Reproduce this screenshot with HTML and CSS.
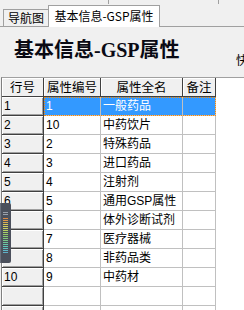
FILE: index.html
```html
<!DOCTYPE html>
<html lang="zh-CN">
<head>
<meta charset="utf-8">
<title>基本信息-GSP属性</title>
<link rel="stylesheet" href="styles.css">
</head>
<body>
<div class="topstrip"><span class="seg seg-a"></span><span class="seg seg-b"></span></div>
<div class="tabs">
  <div class="tab">导航图</div>
  <div class="tab active">基本信息-GSP属性</div>
</div>
<div class="titlebar">
  <h1 class="title">基本信息-GSP属性</h1>
  <span class="cut">快</span>
</div>
<div class="grid">
  <div class="row head">
    <div class="c hc">行号</div><div class="c hc">属性编号</div><div class="c hc">属性全名</div><div class="c hc">备注</div>
  </div>
  <div class="row sel">
    <div class="c rn">1</div><div class="c d">1</div><div class="c d">一般药品</div><div class="c d"></div>
  </div>
  <div class="row">
    <div class="c rn">2</div><div class="c d">10</div><div class="c d">中药饮片</div><div class="c d"></div>
  </div>
  <div class="row">
    <div class="c rn">3</div><div class="c d">2</div><div class="c d">特殊药品</div><div class="c d"></div>
  </div>
  <div class="row">
    <div class="c rn">4</div><div class="c d">3</div><div class="c d">进口药品</div><div class="c d"></div>
  </div>
  <div class="row">
    <div class="c rn">5</div><div class="c d">4</div><div class="c d">注射剂</div><div class="c d"></div>
  </div>
  <div class="row">
    <div class="c rn">6</div><div class="c d">5</div><div class="c d">通用GSP属性</div><div class="c d"></div>
  </div>
  <div class="row">
    <div class="c rn">7</div><div class="c d">6</div><div class="c d">体外诊断试剂</div><div class="c d"></div>
  </div>
  <div class="row">
    <div class="c rn">8</div><div class="c d">7</div><div class="c d">医疗器械</div><div class="c d"></div>
  </div>
  <div class="row">
    <div class="c rn">9</div><div class="c d">8</div><div class="c d">非药品类</div><div class="c d"></div>
  </div>
  <div class="row">
    <div class="c rn">10</div><div class="c d">9</div><div class="c d">中药材</div><div class="c d"></div>
  </div>
  <div class="row">
    <div class="c rn"></div><div class="c d"></div><div class="c d"></div><div class="c d"></div>
  </div>
  <div class="row">
    <div class="c rn"></div><div class="c d"></div><div class="c d"></div><div class="c d"></div>
  </div>
</div>
<div class="meter">
  <svg width="11" height="60" viewBox="0 0 11 60">
    <rect x="0" y="0" width="11" height="60" rx="2" fill="#4b505c"/>
    <rect x="0" y="0" width="1" height="60" fill="#6a707c"/>
    <g stroke-width="1">
      <line x1="3" y1="9.5" x2="8" y2="9.5" stroke="#9aa0aa"/>
      <line x1="3" y1="11.5" x2="8" y2="11.5" stroke="#9aa0aa"/>
      <line x1="3" y1="15.5" x2="8" y2="15.5" stroke="#e08a40"/>
      <line x1="3" y1="17.5" x2="8" y2="17.5" stroke="#e09a48"/>
      <line x1="3" y1="19.5" x2="8" y2="19.5" stroke="#d8b050"/>
      <line x1="3" y1="21.5" x2="8" y2="21.5" stroke="#d8c858"/>
      <line x1="3" y1="23.5" x2="8" y2="23.5" stroke="#d0d060"/>
      <line x1="3" y1="25.5" x2="8" y2="25.5" stroke="#c8d060"/>
      <line x1="3" y1="27.5" x2="8" y2="27.5" stroke="#b8d060"/>
      <line x1="3" y1="29.5" x2="8" y2="29.5" stroke="#a8d068"/>
      <line x1="3" y1="31.5" x2="8" y2="31.5" stroke="#98c868"/>
      <line x1="3" y1="33.5" x2="8" y2="33.5" stroke="#88c870"/>
      <line x1="3" y1="35.5" x2="8" y2="35.5" stroke="#80c878"/>
      <line x1="3" y1="37.5" x2="8" y2="37.5" stroke="#78c888"/>
      <line x1="3" y1="39.5" x2="8" y2="39.5" stroke="#70c898"/>
      <line x1="3" y1="41.5" x2="8" y2="41.5" stroke="#68c8a8"/>
      <line x1="3" y1="43.5" x2="8" y2="43.5" stroke="#60c8b8"/>
      <line x1="3" y1="45.5" x2="8" y2="45.5" stroke="#60c0c0"/>
      <line x1="3" y1="47.5" x2="8" y2="47.5" stroke="#60b8c8"/>
      <line x1="3" y1="49.5" x2="8" y2="49.5" stroke="#60b0c8"/>
    </g>
  </svg>
</div>
</body>
</html>
```

FILE: styles.css
```css
html, body {
  margin: 0;
  padding: 0;
}
body {
  width: 244px;
  height: 310px;
  overflow: hidden;
  background: #f0f0f0;
  font-family: "Liberation Sans", "Noto Sans CJK SC", sans-serif;
  font-size: 12px;
  color: #000;
  position: relative;
}
.topstrip {
  display: flex;
  height: 5px;
}
.seg {
  box-sizing: border-box;
  height: 4px;
  border-right: 1px solid #a0a0a0;
}
.seg-a { width: 109px; }
.seg-b { width: 110px; }

.tabs {
  display: flex;
  align-items: flex-end;
  height: 21px;
  padding-left: 3px;
  border-bottom: 1px solid #a0a0a0;
}
.tab {
  box-sizing: border-box;
  height: 17px;
  width: 45px;
  border: 1px solid #a0a0a0;
  border-bottom: none;
  border-right: none;
  font-family: "Noto Sans CJK SC", sans-serif;
  font-size: 12px;
  line-height: 16px;
  text-align: center;
  background: #f0f0f0;
}
.tab.active {
  width: 112px;
  height: 22px;
  margin-bottom: -1px;
  background: #fff;
  border-right: 1px solid #a0a0a0;
  line-height: 20px;
  padding-bottom: 2px;
}

.titlebar {
  display: flex;
  align-items: flex-start;
  width: 256px;
  height: 50px;
  white-space: nowrap;
}
.title {
  margin: 13px 0 0 0;
  padding-left: 14px;
  width: 236px;
  box-sizing: border-box;
  font-family: "Liberation Serif", "Noto Sans CJK SC", serif;
  font-size: 20px;
  line-height: 20px;
  font-weight: bold;
  color: #0a0a14;
  flex: none;
}
.cut {
  margin-top: 27px;
  font-family: "Noto Sans CJK SC", sans-serif;
  font-size: 12px;
  line-height: 12px;
  flex: none;
}

.grid {
  border-top: 1px solid #a0a0a0;
  background: #fff;
  margin-left: 1px;
  border-left: 1px solid #808080;
  height: 240px;
}
.row {
  display: grid;
  grid-template-columns: 42px 57px 82px 33px;
  height: 19px;
  position: relative;
}
.c {
  box-sizing: border-box;
  height: 19px;
  line-height: 18px;
  padding-left: 2px;
  white-space: nowrap;
  overflow: hidden;
}
.hc {
  background: #f0f0f0;
  border-right: 1px solid #404040;
  border-bottom: 1px solid #404040;
  box-shadow: inset 1px 1px 0 #fff;
  text-align: center;
  padding-left: 0;
  font-family: "Noto Sans CJK SC", sans-serif;
  font-size: 12.5px;
}
.rn {
  background: #f0f0f0;
  border-right: 1px solid #404040;
  border-bottom: 1px solid #404040;
  box-shadow: inset 1px 1px 0 #fff, inset -1px -1px 0 #a0a0a0;
}
.d {
  border-right: 1px solid #c0c0c0;
  border-bottom: 1px solid #c0c0c0;
}
.sel .d {
  background: #3399ff;
  color: #fff;
}
.sel::after {
  content: "";
  position: absolute;
  left: 42px;
  top: 0;
  width: 172px;
  height: 19px;
  box-sizing: border-box;
  border: 1px dotted #ff8a00;
}

.meter {
  position: absolute;
  left: 0;
  top: 203px;
  width: 11px;
  height: 60px;
  line-height: 0;
}
```
